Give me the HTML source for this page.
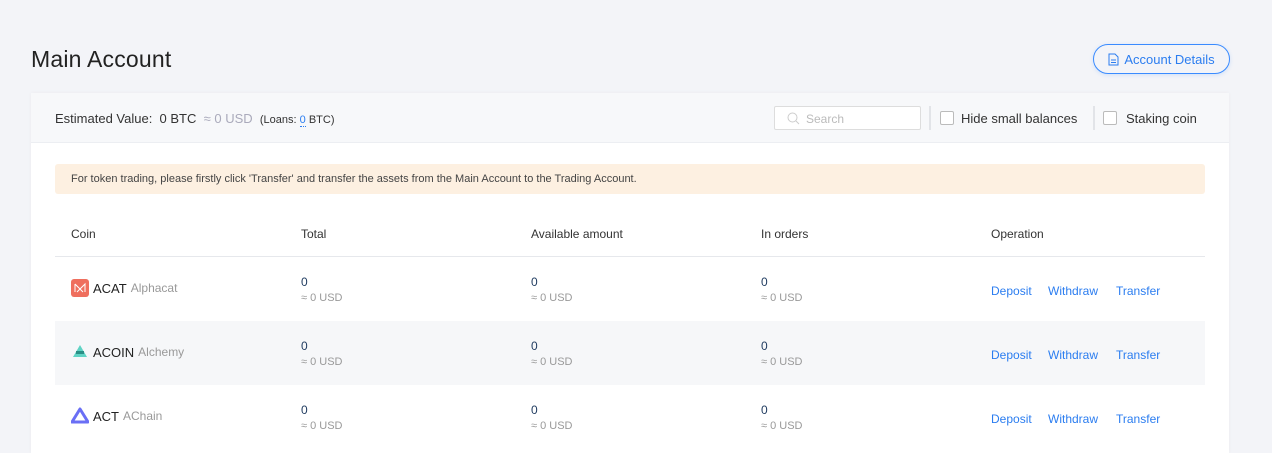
<!DOCTYPE html>
<html><head><meta charset="utf-8"><style>
*{box-sizing:border-box;margin:0;padding:0}
body{width:1272px;height:444px;overflow:hidden;background:#f3f4f8;font-family:"Liberation Sans",sans-serif;color:#333;position:relative}
.abs{position:absolute}
h1{position:absolute;left:31px;top:46px;font-size:23px;font-weight:normal;color:#222;letter-spacing:0.2px}
.btn{left:1093px;top:44px;width:137px;height:30px;border:1px solid #3a8bff;border-radius:15px;color:#2b7df0;font-size:13px;display:flex;align-items:center;justify-content:center;gap:5px;background:#f3f4f8;box-shadow:0 1px 4px rgba(58,139,255,.2)}
.card{left:31px;top:93px;width:1198px;height:360px;background:#fff;box-shadow:0 0 4px rgba(0,0,0,.04)}
.head{left:0;top:0;width:1198px;height:50px;background:#f7f8fa;border-bottom:1px solid #eceef2}
.est{left:24px;top:18px;font-size:13px;color:#333;white-space:nowrap}
.gray{color:#aab}
.search{left:743px;top:13px;width:147px;height:24px;border:1px solid #ddd;background:#fff;border-radius:2px;font-size:12px;color:#bbb;padding:5px 0 0 31px}
.sep{width:2px;height:24px;background:#e2e4e8;top:13px}
.cb{width:14px;height:14px;border:1px solid #bbb;background:#fff;border-radius:2px;top:18px}
.lbl{font-size:13px;color:#333;top:18px}
.banner{left:24px;top:71px;width:1150px;height:30px;background:#fdf0e1;border-radius:3px;font-size:11px;color:#444;padding:9px 0 0 16px}
.th{top:134px;font-size:12px;color:#333}
.hl{left:24px;top:163px;width:1150px;height:1px;background:#e6e8ec}
.row{left:24px;width:1150px;height:64px}
.row.g{background:#f6f7f9}
.c{position:absolute;font-size:12px}
.n{color:#1e3a5f;font-size:12px}
.u{color:#999;font-size:11px;margin-top:3px}
.op{color:#2b7df0;font-size:12px}
.sym{font-size:13px;color:#222}
</style></head><body>
<h1>Main Account</h1>
<div class="abs btn"><svg width="11" height="13" viewBox="0 0 11 13"><path d="M1 1h6l3 3v8H1z" fill="none" stroke="#2b7df0"/><path d="M3 7h5M3 9.5h5" stroke="#2b7df0"/></svg>Account Details</div>
<div class="abs card">
 <div class="abs head">
  <div class="abs est">Estimated Value:&nbsp; 0 BTC &nbsp;<span class="gray">≈ 0 USD</span> &nbsp;<span style="font-size:11px">(Loans: <span style="color:#2b7df0;border-bottom:1px dotted #2b7df0">0</span> BTC)</span></div>
  <div class="abs search">Search<svg class="abs" style="left:12px;top:5px" width="13" height="13" viewBox="0 0 13 13"><circle cx="5.5" cy="5.5" r="4.5" fill="none" stroke="#ccc"/><path d="M9 9l3 3" stroke="#ccc"/></svg></div>
  <div class="abs sep" style="left:898px"></div>
  <div class="abs cb" style="left:909px"></div>
  <div class="abs lbl" style="left:930px">Hide small balances</div>
  <div class="abs sep" style="left:1062px"></div>
  <div class="abs cb" style="left:1072px"></div>
  <div class="abs lbl" style="left:1095px">Staking coin</div>
 </div>
 <div class="abs banner">For token trading, please firstly click 'Transfer' and transfer the assets from the Main Account to the Trading Account.</div>
 <div class="abs th" style="left:40px">Coin</div>
 <div class="abs th" style="left:270px">Total</div>
 <div class="abs th" style="left:500px">Available amount</div>
 <div class="abs th" style="left:730px">In orders</div>
 <div class="abs th" style="left:960px">Operation</div>
 <div class="abs hl"></div>
 <div class="abs row" style="top:164px">
  <div class="c" style="left:16px;top:22px;display:flex;align-items:center;gap:4px"><svg width="18" height="18"><rect width="18" height="18" rx="3" fill="#ef6f5e"/><path d="M4 5l5 5 5-5v8M4 5v8M6 13l3-3 3 3" stroke="#fff" fill="none" stroke-width="1"/></svg><span class="sym">ACAT</span> <span class="gray" style="color:#999">Alphacat</span></div>
  <div class="c" style="left:246px;top:18px"><div class="n">0</div><div class="u">≈ 0 USD</div></div>
  <div class="c" style="left:476px;top:18px"><div class="n">0</div><div class="u">≈ 0 USD</div></div>
  <div class="c" style="left:706px;top:18px"><div class="n">0</div><div class="u">≈ 0 USD</div></div>
  <div class="c op" style="left:936px;top:27px">Deposit</div><div class="c op" style="left:993px;top:27px">Withdraw</div><div class="c op" style="left:1061px;top:27px">Transfer</div>
 </div>
 <div class="abs row g" style="top:228px">
  <div class="c" style="left:16px;top:22px;display:flex;align-items:center;gap:4px"><svg width="18" height="18"><path d="M9 2l7 12H2z" fill="#5fd3c4"/><rect x="5" y="8" width="8" height="3" fill="#2a8f86"/></svg><span class="sym">ACOIN</span> <span style="color:#999">Alchemy</span></div>
  <div class="c" style="left:246px;top:18px"><div class="n">0</div><div class="u">≈ 0 USD</div></div>
  <div class="c" style="left:476px;top:18px"><div class="n">0</div><div class="u">≈ 0 USD</div></div>
  <div class="c" style="left:706px;top:18px"><div class="n">0</div><div class="u">≈ 0 USD</div></div>
  <div class="c op" style="left:936px;top:27px">Deposit</div><div class="c op" style="left:993px;top:27px">Withdraw</div><div class="c op" style="left:1061px;top:27px">Transfer</div>
 </div>
 <div class="abs row" style="top:292px">
  <div class="c" style="left:16px;top:22px;display:flex;align-items:center;gap:4px"><svg width="18" height="18"><path d="M9 2l8 13H1z" fill="none" stroke="#6a6ff5" stroke-width="3" stroke-linejoin="round"/></svg><span class="sym">ACT</span> <span style="color:#999">AChain</span></div>
  <div class="c" style="left:246px;top:18px"><div class="n">0</div><div class="u">≈ 0 USD</div></div>
  <div class="c" style="left:476px;top:18px"><div class="n">0</div><div class="u">≈ 0 USD</div></div>
  <div class="c" style="left:706px;top:18px"><div class="n">0</div><div class="u">≈ 0 USD</div></div>
  <div class="c op" style="left:936px;top:27px">Deposit</div><div class="c op" style="left:993px;top:27px">Withdraw</div><div class="c op" style="left:1061px;top:27px">Transfer</div>
 </div>
</div>
</body></html>
